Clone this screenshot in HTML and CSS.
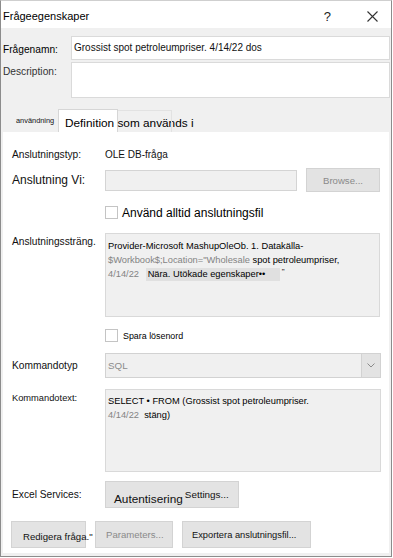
FILE: index.html
```html
<!DOCTYPE html>
<html lang="sv">
<head>
  <meta charset="UTF-8">
  <meta name="viewport" content="width=device-width, initial-scale=1.0">
  <title>Frågeegenskaper</title>
  <link rel="stylesheet" href="styles.css">
</head>
<body>
  <div class="dialog">
    <div class="titlebar">
      <span class="title">Frågeegenskaper</span>
      <span class="help">?</span>
      <svg class="close" width="11" height="11" viewBox="0 0 11 11">
        <path d="M0.5 0.5 L10.5 10.5 M10.5 0.5 L0.5 10.5" stroke="#333" stroke-width="1.1" fill="none"/>
      </svg>
    </div>

    <div class="meta">
      <span class="meta-label">Frågenamn:</span>
      <div class="input name">Grossist spot petroleumpriser. 4/14/22 dos</div>
      <span class="meta-label desc-label">Description:</span>
      <div class="input desc"></div>
    </div>

    <div class="tabs">
      <div class="tab tab-first">användning</div>
      <div class="tab tab-active">Definition som används i</div>
      <div class="tab tab-next"></div>
    </div>

    <div class="panel">
      <div class="row row-type">
        <span class="label">Anslutningstyp:</span>
        <span class="value">OLE DB-fråga</span>
      </div>

      <div class="row row-file">
        <span class="label big">Anslutning Vi:</span>
        <div class="field file-field"></div>
        <button class="btn browse">Browse...</button>
      </div>

      <div class="row check-row">
        <span class="box"></span>
        <span class="check-text big">Använd alltid anslutningsfil</span>
      </div>

      <div class="row row-area">
        <span class="label area-label">Anslutningssträng.</span>
        <div class="area conn">
          <div>Provider-Microsoft MashupOleOb. 1. Datakälla-</div>
          <div><span class="dim">$Workbook$;Location="Wholesale</span> spot petroleumpriser,</div>
          <div><span class="dim">4/14/22</span> <span class="mark">Nära. Utökade egenskaper••</span><span class="quote">"</span></div>
        </div>
      </div>

      <div class="row check-row small-check">
        <span class="box"></span>
        <span class="check-text">Spara lösenord</span>
      </div>

      <div class="row row-select">
        <span class="label">Kommandotyp</span>
        <div class="select">
          <span class="select-value">SQL</span>
          <span class="select-arrow">
            <svg width="8" height="5" viewBox="0 0 8 5">
              <path d="M0.5 0.5 L4 4 L7.5 0.5" stroke="#8a8a8a" stroke-width="1" fill="none"/>
            </svg>
          </span>
        </div>
      </div>

      <div class="row row-cmd">
        <span class="label area-label cmd-label">Kommandotext:</span>
        <div class="area cmd">
          <div>SELECT • FROM (Grossist spot petroleumpriser.</div>
          <div><span class="dim">4/14/22</span>&nbsp; stäng)</div>
        </div>
      </div>

      <div class="row row-excel">
        <span class="label">Excel Services:</span>
        <button class="btn auth"><span class="auth-main">Autentisering</span><span class="auth-sub">Settings...</span></button>
      </div>

      <div class="row actions">
        <button class="btn edit">Redigera fråga."</button>
        <button class="btn params">Parameters...</button>
        <button class="btn export">Exportera anslutningsfil...</button>
      </div>
    </div>
  </div>
</body>
</html>
```

FILE: styles.css
```css
body {
  margin: 0;
  font-family: "Liberation Sans", Arial, sans-serif;
  color: #111;
  background: #fff;
}

.dialog {
  width: 392px;
  height: 557px;
  box-sizing: border-box;
  border: 1px solid #8c8c8c;
  border-top-color: #cfcfcf;
  background: #f0f0f0;
  display: flex;
  flex-direction: column;
}

.titlebar {
  height: 27px;
  background: #fff;
  display: flex;
  align-items: center;
  padding: 3px 0 0 2px;
  box-sizing: border-box;
}

.title {
  font-size: 11px;
  color: #000;
}

.help {
  margin-left: auto;
  font-size: 13px;
  color: #222;
}

.close {
  margin: 0 13px 0 36px;
}

.meta {
  display: grid;
  grid-template-columns: 68px 1fr;
  row-gap: 2px;
  padding: 8px 1px 0 2px;
}

.meta-label {
  font-size: 10.2px;
  color: #000;
  align-self: center;
  padding-top: 2px;
}

.desc-label {
  align-self: start;
  padding-top: 4px;
  color: #333;
}

.input {
  background: #fff;
  border: 1px solid #dadada;
  box-sizing: border-box;
  font-size: 10px;
  padding-left: 2px;
}

.name {
  height: 24px;
  line-height: 22px;
}

.desc {
  height: 36px;
}

.tabs {
  display: flex;
  align-items: flex-end;
  height: 23px;
  margin-top: 11px;
  padding-left: 2px;
}

.tab {
  box-sizing: border-box;
  white-space: nowrap;
}

.tab-first {
  width: 55px;
  height: 23px;
  padding-left: 13px;
  font-size: 7.4px;
  line-height: 23px;
}

.tab-active {
  width: 60px;
  height: 23px;
  background: #fff;
  border: 1px solid #d6d6d6;
  border-bottom: none;
  padding: 6px 0 0 6px;
  font-size: 11.8px;
  color: #000;
}

.tab-next {
  width: 54px;
  height: 22px;
  border-top: 1px solid #e2e2e2;
  border-right: 1px solid #e2e2e2;
}

.panel {
  flex: 1;
  background: #fff;
  margin: 0 2px 3px 2px;
  padding: 14px 8px 0 9px;
  display: flex;
  flex-direction: column;
}

.row {
  display: flex;
  align-items: center;
}

.label {
  flex: 0 0 93px;
  font-size: 10.2px;
  color: #111;
}

.big {
  font-size: 12px;
}

.value {
  font-size: 10px;
}

.row-type {
  height: 16px;
}

.row-file {
  height: 24px;
  margin-top: 6px;
}

.field {
  background: #f0f0f0;
  border: 1px solid #d4d4d4;
  box-sizing: border-box;
}

.file-field {
  flex: 0 0 192px;
  height: 21px;
}

.btn {
  font-family: inherit;
  background: #e3e3e3;
  border: 1px solid #d3d3d3;
  box-sizing: border-box;
  padding: 0;
  margin: 0;
  color: #111;
  white-space: nowrap;
}

.browse {
  flex: 0 0 74px;
  height: 24px;
  margin-left: 9px;
  font-size: 9.6px;
  color: #8a8a8a;
}

.check-row {
  height: 13px;
  margin-top: 14px;
  padding-left: 93px;
}

.box {
  width: 13px;
  height: 13px;
  box-sizing: border-box;
  border: 1px solid #c4c4c4;
  background: #fff;
  flex-shrink: 0;
}

.check-text {
  margin-left: 4px;
  color: #000;
}

.small-check {
  margin-top: 12px;
}

.small-check .check-text {
  font-size: 8.9px;
  margin-left: 5px;
}

.row-area {
  align-items: flex-start;
  margin-top: 14px;
}

.area-label {
  padding-top: 3px;
}

.area {
  flex: 1;
  background: #f0f0f0;
  border: 1px solid #d9d9d9;
  box-sizing: border-box;
  font-size: 9.3px;
  line-height: 14px;
  padding: 5px 0 0 2px;
  white-space: nowrap;
  color: #000;
}

.conn {
  height: 84px;
  margin-right: 1px;
}

.dim {
  color: #838383;
}

.mark {
  display: inline-block;
  width: 132px;
  margin-left: 4px;
  padding-left: 2px;
  background: #e0e0e0;
  line-height: 13px;
}

.quote {
  vertical-align: top;
  margin-left: 2px;
  font-size: 8px;
  line-height: 10px;
}

.row-select {
  height: 25px;
  margin-top: 11px;
}

.select {
  flex: 1;
  height: 25px;
  display: flex;
  align-items: center;
  background: #f0f0f0;
  border: 1px solid #d2d2d2;
  box-sizing: border-box;
}

.select-value {
  flex: 1;
  padding-left: 2px;
  font-size: 9.8px;
  color: #8c8c8c;
}

.select-arrow {
  width: 18px;
  height: 100%;
  display: flex;
  align-items: center;
  justify-content: center;
  background: #e3e3e3;
  border-left: 1px solid #d2d2d2;
}

.row-cmd {
  align-items: flex-start;
  margin-top: 11px;
}

.cmd-label {
  font-size: 9.3px;
  padding-top: 4px;
}

.cmd {
  height: 83px;
  padding-top: 4px;
}

.row-excel {
  height: 27px;
  margin-top: 9px;
}

.auth {
  width: 134px;
  height: 27px;
  display: flex;
  align-items: center;
  padding-left: 8px;
}

.auth-main {
  font-size: 11.8px;
  margin-top: 8px;
}

.auth-sub {
  font-size: 9.9px;
  margin-left: 2px;
}

.actions {
  height: 27px;
  margin-top: 13px;
  margin-left: -1px;
  gap: 9px;
}

.actions .btn {
  height: 27px;
  display: flex;
  align-items: center;
  font-size: 9.6px;
}

.edit {
  width: 75px;
  padding-left: 11px;
  padding-top: 3px;
}

.params {
  width: 78px;
  padding-left: 10px;
  color: #8a8a8a;
}

.export {
  width: 129px;
  padding-left: 9px;
  font-size: 9.3px !important;
}
```
